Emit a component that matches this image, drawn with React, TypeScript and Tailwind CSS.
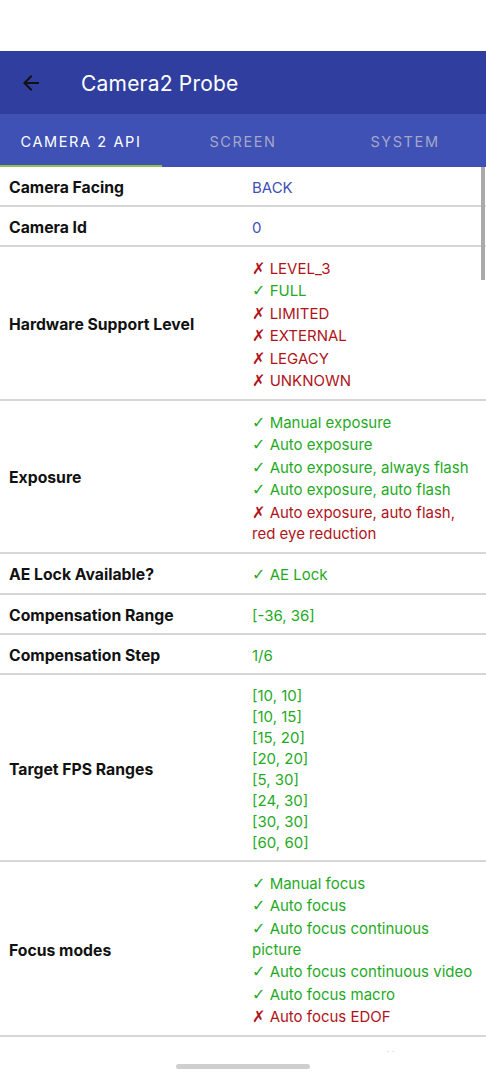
import React from 'react';

type Item = { ok?: boolean; text: string };

interface Row {
  label: string;
  values: Item[];
  tone?: 'blue' | 'green';
}

const rows: Row[] = [
  { label: 'Camera Facing', values: [{ text: 'BACK' }], tone: 'blue' },
  { label: 'Camera Id', values: [{ text: '0' }], tone: 'blue' },
  {
    label: 'Hardware Support Level',
    values: [
      { ok: false, text: 'LEVEL_3' },
      { ok: true, text: 'FULL' },
      { ok: false, text: 'LIMITED' },
      { ok: false, text: 'EXTERNAL' },
      { ok: false, text: 'LEGACY' },
      { ok: false, text: 'UNKNOWN' },
    ],
  },
  {
    label: 'Exposure',
    values: [
      { ok: true, text: 'Manual exposure' },
      { ok: true, text: 'Auto exposure' },
      { ok: true, text: 'Auto exposure, always flash' },
      { ok: true, text: 'Auto exposure, auto flash' },
      { ok: false, text: 'Auto exposure, auto flash, red eye reduction' },
    ],
  },
  { label: 'AE Lock Available?', values: [{ ok: true, text: 'AE Lock' }] },
  { label: 'Compensation Range', values: [{ text: '[-36, 36]' }], tone: 'green' },
  { label: 'Compensation Step', values: [{ text: '1/6' }], tone: 'green' },
  {
    label: 'Target FPS Ranges',
    tone: 'green',
    values: ['[10, 10]', '[10, 15]', '[15, 20]', '[20, 20]', '[5, 30]', '[24, 30]', '[30, 30]', '[60, 60]'].map(
      (t) => ({ text: t })
    ),
  },
  {
    label: 'Focus modes',
    values: [
      { ok: true, text: 'Manual focus' },
      { ok: true, text: 'Auto focus' },
      { ok: true, text: 'Auto focus continuous picture' },
      { ok: true, text: 'Auto focus continuous video' },
      { ok: true, text: 'Auto focus macro' },
      { ok: false, text: 'Auto focus EDOF' },
    ],
  },
  {
    label: 'White balance',
    values: [
      { ok: true, text: 'White balance off' },
      { ok: true, text: 'Auto white balance' },
    ],
  },
];

const ValueLine: React.FC<{ item: Item; tone?: Row['tone'] }> = ({ item, tone }) => {
  if (item.ok === undefined) {
    return (
      <div className={`leading-[21px] ${tone === 'blue' ? 'text-[#3f51b5]' : 'text-[#1faa1f]'}`}>{item.text}</div>
    );
  }
  return (
    <div className={`leading-[21px] py-[0.75px] ${item.ok ? 'text-[#1faa1f]' : 'text-[#b0141a]'}`}>
      <span className="font-['DejaVu_Sans',sans-serif] text-[16px] leading-[0]">{item.ok ? '\u2713' : '\u2717'}</span>{' '}
      {item.text}
    </div>
  );
};

const App: React.FC = () => {
  return (
    <div className="w-[486px] h-[1080px] bg-white flex flex-col overflow-hidden font-['Inter',sans-serif]">
      {/* status bar */}
      <div className="h-[51px] bg-white shrink-0" />

      {/* app bar */}
      <div className="h-[63px] bg-[#303f9f] flex items-center shrink-0">
        <svg width="24" height="24" viewBox="0 0 24 24" className="ml-[19px] mt-[1px] text-[#111]">
          <path fill="currentColor" d="M20 11H7.83l5.59-5.59L12 4l-8 8 8 8 1.41-1.41L7.83 13H20v-2z" />
        </svg>
        <span className="ml-[38px] mt-[2px] text-white text-[21px] tracking-[0.2px]">Camera2 Probe</span>
      </div>

      {/* tabs */}
      <div className="h-[53px] bg-[#3f51b5] flex shrink-0">
        {['CAMERA 2 API', 'SCREEN', 'SYSTEM'].map((t, i) => (
          <div key={t} className="flex-1 flex flex-col">
            <div
              className={`flex-1 flex items-center justify-center pt-[4px] text-[14.5px] tracking-[1.6px] ${
                i === 0 ? 'text-white' : 'text-[#a3a8c8]'
              }`}
            >
              {t}
            </div>
            <div className={`h-[2px] ${i === 0 ? 'bg-[#8bc34a]' : 'bg-transparent'}`} />
          </div>
        ))}
      </div>

      {/* list */}
      <div className="relative h-[885px] overflow-hidden shrink-0">
        {rows.map((r) => (
          <div key={r.label} className="flex items-center border-b-2 border-[#d6d6d6] pt-[10px] pb-[7px]">
            <div className="w-[252px] pl-[9px] text-[15.75px] leading-[21px] font-bold text-[#111]">{r.label}</div>
            <div className="w-[224px] text-[15px]">
              {r.values.map((v, i) => (
                <ValueLine key={i} item={v} tone={r.tone} />
              ))}
            </div>
          </div>
        ))}
        <div className="absolute right-[1px] top-0 w-[4px] h-[113px] bg-[#aaaaaa]" />
      </div>

      {/* nav handle */}
      <div className="flex-1 flex justify-center pt-[12px]">
        <div className="w-[134px] h-[5px] rounded-full bg-[#cfcfcf]" />
      </div>
    </div>
  );
};

export default App;
